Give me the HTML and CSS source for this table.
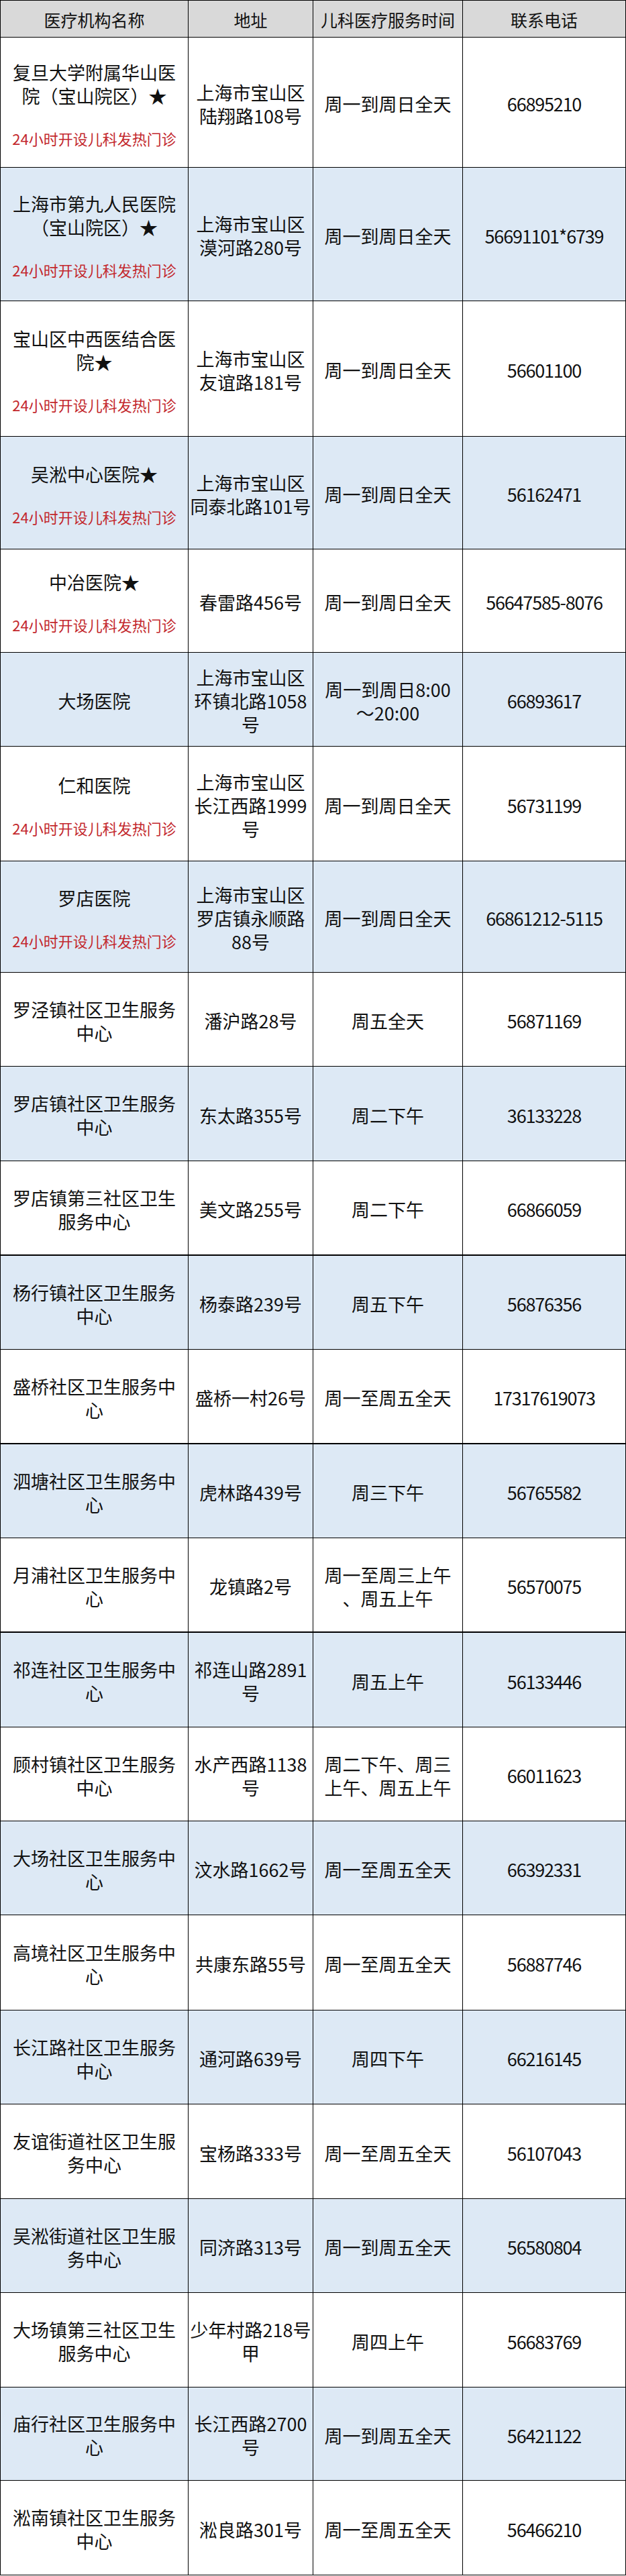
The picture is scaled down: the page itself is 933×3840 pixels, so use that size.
FILE: index.html
```html
<!DOCTYPE html>
<html lang="zh-CN">
<head>
<meta charset="utf-8">
<title>宝山区儿科医疗服务</title>
<link rel="stylesheet" href="styles.css">
</head>
<body>
<div class="table">
  <div class="row head h55">
    <div class="cell">医疗机构名称</div>
    <div class="cell">地址</div>
    <div class="cell">儿科医疗服务时间</div>
    <div class="cell">联系电话</div>
  </div>

  <div class="row h194">
    <div class="cell"><div>复旦大学附属华山医<br>院（宝山院区）★</div><div class="note">24小时开设儿科发热门诊</div></div>
    <div class="cell">上海市宝山区<br>陆翔路108号</div>
    <div class="cell">周一到周日全天</div>
    <div class="cell phone">66895210</div>
  </div>

  <div class="row blue h199">
    <div class="cell"><div>上海市第九人民医院<br>（宝山院区）★</div><div class="note">24小时开设儿科发热门诊</div></div>
    <div class="cell">上海市宝山区<br>漠河路280号</div>
    <div class="cell">周一到周日全天</div>
    <div class="cell phone">56691101*6739</div>
  </div>

  <div class="row h202">
    <div class="cell"><div>宝山区中西医结合医<br>院★</div><div class="note">24小时开设儿科发热门诊</div></div>
    <div class="cell">上海市宝山区<br>友谊路181号</div>
    <div class="cell">周一到周日全天</div>
    <div class="cell phone">56601100</div>
  </div>

  <div class="row blue h168">
    <div class="cell"><div>吴淞中心医院★</div><div class="note">24小时开设儿科发热门诊</div></div>
    <div class="cell">上海市宝山区<br>同泰北路101号</div>
    <div class="cell">周一到周日全天</div>
    <div class="cell phone">56162471</div>
  </div>

  <div class="row h154">
    <div class="cell"><div>中冶医院★</div><div class="note">24小时开设儿科发热门诊</div></div>
    <div class="cell">春雷路456号</div>
    <div class="cell">周一到周日全天</div>
    <div class="cell phone">56647585-8076</div>
  </div>

  <div class="row blue h140">
    <div class="cell">大场医院</div>
    <div class="cell">上海市宝山区<br>环镇北路1058<br>号</div>
    <div class="cell">周一到周日8:00<br>～20:00</div>
    <div class="cell phone">66893617</div>
  </div>

  <div class="row h171">
    <div class="cell"><div>仁和医院</div><div class="note">24小时开设儿科发热门诊</div></div>
    <div class="cell">上海市宝山区<br>长江西路1999<br>号</div>
    <div class="cell">周一到周日全天</div>
    <div class="cell phone">56731199</div>
  </div>

  <div class="row blue h166">
    <div class="cell"><div>罗店医院</div><div class="note">24小时开设儿科发热门诊</div></div>
    <div class="cell">上海市宝山区<br>罗店镇永顺路<br>88号</div>
    <div class="cell">周一到周日全天</div>
    <div class="cell phone">66861212-5115</div>
  </div>

  <div class="row h140">
    <div class="cell">罗泾镇社区卫生服务<br>中心</div>
    <div class="cell">潘沪路28号</div>
    <div class="cell">周五全天</div>
    <div class="cell phone">56871169</div>
  </div>

  <div class="row blue h141">
    <div class="cell">罗店镇社区卫生服务<br>中心</div>
    <div class="cell">东太路355号</div>
    <div class="cell">周二下午</div>
    <div class="cell phone">36133228</div>
  </div>

  <div class="row thick h141">
    <div class="cell">罗店镇第三社区卫生<br>服务中心</div>
    <div class="cell">美文路255号</div>
    <div class="cell">周二下午</div>
    <div class="cell phone">66866059</div>
  </div>

  <div class="row blue h140">
    <div class="cell">杨行镇社区卫生服务<br>中心</div>
    <div class="cell">杨泰路239号</div>
    <div class="cell">周五下午</div>
    <div class="cell phone">56876356</div>
  </div>

  <div class="row thick h141">
    <div class="cell">盛桥社区卫生服务中<br>心</div>
    <div class="cell">盛桥一村26号</div>
    <div class="cell">周一至周五全天</div>
    <div class="cell phone">17317619073</div>
  </div>

  <div class="row blue h140">
    <div class="cell">泗塘社区卫生服务中<br>心</div>
    <div class="cell">虎林路439号</div>
    <div class="cell">周三下午</div>
    <div class="cell phone">56765582</div>
  </div>

  <div class="row thick h141">
    <div class="cell">月浦社区卫生服务中<br>心</div>
    <div class="cell">龙镇路2号</div>
    <div class="cell">周一至周三上午<br>、周五上午</div>
    <div class="cell phone">56570075</div>
  </div>

  <div class="row blue h141">
    <div class="cell">祁连社区卫生服务中<br>心</div>
    <div class="cell">祁连山路2891<br>号</div>
    <div class="cell">周五上午</div>
    <div class="cell phone">56133446</div>
  </div>

  <div class="row h140">
    <div class="cell">顾村镇社区卫生服务<br>中心</div>
    <div class="cell">水产西路1138<br>号</div>
    <div class="cell">周二下午、周三<br>上午、周五上午</div>
    <div class="cell phone">66011623</div>
  </div>

  <div class="row blue h140">
    <div class="cell">大场社区卫生服务中<br>心</div>
    <div class="cell">汶水路1662号</div>
    <div class="cell">周一至周五全天</div>
    <div class="cell phone">66392331</div>
  </div>

  <div class="row h142">
    <div class="cell">高境社区卫生服务中<br>心</div>
    <div class="cell">共康东路55号</div>
    <div class="cell">周一至周五全天</div>
    <div class="cell phone">56887746</div>
  </div>

  <div class="row blue h140">
    <div class="cell">长江路社区卫生服务<br>中心</div>
    <div class="cell">通河路639号</div>
    <div class="cell">周四下午</div>
    <div class="cell phone">66216145</div>
  </div>

  <div class="row h141">
    <div class="cell">友谊街道社区卫生服<br>务中心</div>
    <div class="cell">宝杨路333号</div>
    <div class="cell">周一至周五全天</div>
    <div class="cell phone">56107043</div>
  </div>

  <div class="row blue h140">
    <div class="cell">吴淞街道社区卫生服<br>务中心</div>
    <div class="cell">同济路313号</div>
    <div class="cell">周一到周五全天</div>
    <div class="cell phone">56580804</div>
  </div>

  <div class="row h141">
    <div class="cell">大场镇第三社区卫生<br>服务中心</div>
    <div class="cell">少年村路218号<br>甲</div>
    <div class="cell">周四上午</div>
    <div class="cell phone">56683769</div>
  </div>

  <div class="row blue h139">
    <div class="cell">庙行社区卫生服务中<br>心</div>
    <div class="cell">长江西路2700<br>号</div>
    <div class="cell">周一到周五全天</div>
    <div class="cell phone">56421122</div>
  </div>

  <div class="row h141">
    <div class="cell">淞南镇社区卫生服务<br>中心</div>
    <div class="cell">淞良路301号</div>
    <div class="cell">周一至周五全天</div>
    <div class="cell phone">56466210</div>
  </div>
</div>
</body>
</html>
```

FILE: styles.css
```css
html, body {
  margin: 0;
  padding: 0;
  background: #ffffff;
}

body {
  font-family: "Noto Sans CJK SC", "Noto Sans", sans-serif;
  color: #111111;
}

.table {
  width: 933px;
  box-sizing: border-box;
  border-left: 1px solid #000000;
  border-top: 1px solid #000000;
}

.row {
  display: grid;
  grid-template-columns: 280px 186px 223px 243px;
  box-sizing: border-box;
  border-bottom: 1px solid #000000;
  background: #ffffff;
}

.row.blue {
  background: #dde9f5;
}

.row.thick {
  border-bottom-width: 2px;
}

.row.head {
  background: #d9d9d9;
}

.row.head .cell {
  font-size: 25px;
  line-height: 32px;
  padding-top: 2px;
}

.cell {
  box-sizing: border-box;
  border-right: 1px solid #000000;
  display: flex;
  flex-direction: column;
  justify-content: center;
  align-items: center;
  text-align: center;
  font-size: 27px;
  line-height: 35px;
  white-space: nowrap;
  padding: 4px 2px 0;
}

.phone {
  letter-spacing: -1.2px;
}

.note {
  margin-top: 32px;
  font-size: 22px;
  line-height: 28px;
  color: #c3282d;
}

.h55 { height: 55px; }
.h139 { height: 139px; }
.h140 { height: 140px; }
.h141 { height: 141px; }
.h142 { height: 142px; }
.h154 { height: 154px; }
.h166 { height: 166px; }
.h168 { height: 168px; }
.h171 { height: 171px; }
.h194 { height: 194px; }
.h199 { height: 199px; }
.h202 { height: 202px; }
```
